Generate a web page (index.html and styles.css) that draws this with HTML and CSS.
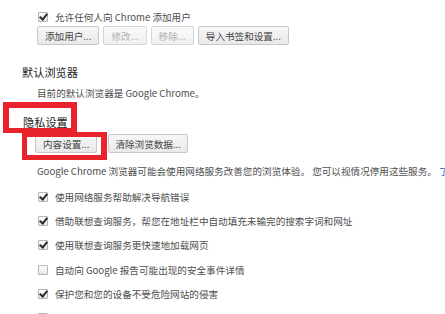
FILE: index.html
```html
<!DOCTYPE html>
<html lang="zh-CN">
<head>
<meta charset="utf-8">
<link rel="stylesheet" href="styles.css">
</head>
<body>
<div class="page">
  <div class="indent">
    <div class="check-row first"><span class="cb on"></span><span>允许任何人向 Chrome 添加用户</span></div>
    <div class="btn-row">
      <span class="btn">添加用户...</span>
      <span class="btn disabled">修改...</span>
      <span class="btn disabled">移除...</span>
      <span class="btn">导入书签和设置...</span>
    </div>
  </div>

  <h3 class="heading h-default">默认浏览器</h3>
  <div class="indent"><p class="text t-default">目前的默认浏览器是 Google Chrome。</p></div>

  <h3 class="heading h-privacy">隐私设置</h3>
  <div class="indent">
    <div class="btn-row privacy-btns">
      <span class="btn">内容设置...</span>
      <span class="btn btn-clear">清除浏览数据...</span>
    </div>
    <p class="text t-privacy">Google Chrome 浏览器可能会使用网络服务改善您的浏览体验。 您可以视情况停用这些服务。 <span class="link">了解详情</span></p>
    <div class="checks">
      <div class="check-row"><span class="cb on"></span><span>使用网络服务帮助解决导航错误</span></div>
      <div class="check-row"><span class="cb on"></span><span>借助联想查询服务，帮您在地址栏中自动填充未输完的搜索字词和网址</span></div>
      <div class="check-row"><span class="cb on"></span><span>使用联想查询服务更快速地加载网页</span></div>
      <div class="check-row"><span class="cb"></span><span>自动向 Google 报告可能出现的安全事件详情</span></div>
      <div class="check-row"><span class="cb on"></span><span>保护您和您的设备不受危险网站的侵害</span></div>
      <div class="check-row"><span class="cb"></span><span>使用网络服务帮助解决拼写错误</span></div>
    </div>
  </div>
</div>
<div class="mark mark-heading"></div>
<div class="mark mark-button"></div>
</body>
</html>
```

FILE: styles.css
```css
html, body {
  margin: 0;
  padding: 0;
  background: #ffffff;
  overflow: hidden;
}
body {
  width: 445px;
  height: 314px;
  position: relative;
  font-family: "Noto Sans CJK SC", "Noto Sans", sans-serif;
  font-size: 9.6px;
  color: #4d4d4d;
}
.page {
  padding-top: 8px;
  white-space: nowrap;
}
.indent {
  padding-left: 37px;
}
.check-row {
  display: flex;
  align-items: center;
  height: 24.2px;
  line-height: 14px;
}
.check-row.first {
  height: 18px;
}
.cb {
  flex: none;
  width: 8px;
  height: 8px;
  margin-left: 1px;
  margin-right: 7px;
  border: 1px solid #b5b5b5;
  border-radius: 1px;
  background: linear-gradient(#fdfdfd, #e8e8e8);
  position: relative;
}
.cb.on::after {
  content: "";
  position: absolute;
  left: 2px;
  top: -1px;
  width: 3px;
  height: 6px;
  border-right: 2px solid #2a2a2a;
  border-bottom: 2px solid #2a2a2a;
  transform: rotate(40deg);
}
.btn-row {
  display: flex;
  gap: 4px;
  height: 19px;
}
.btn {
  display: flex;
  align-items: center;
  height: 17px;
  padding: 0 7px;
  border: 1px solid #c8c8c8;
  border-radius: 2px;
  background: linear-gradient(#f7f7f7, #e9e9e9);
  color: #444;
  line-height: 14px;
}
.btn.disabled {
  color: #b0b0b0;
  border-color: #d6d6d6;
  background: linear-gradient(#fafafa, #f0f0f0);
}
.btn-clear {
  padding: 0 6px;
}
.heading {
  margin: 0;
  padding-left: 22px;
  font-size: 11.2px;
  font-weight: normal;
  line-height: 16px;
  color: #222;
}
.h-default {
  margin-top: 19px;
}
.text {
  margin: 0;
  line-height: 14px;
}
.t-default {
  margin-top: 6px;
}
.h-privacy {
  margin-top: 14px;
  padding-left: 23px;
}
.privacy-btns {
  margin-top: 4px;
  margin-left: -2px;
  gap: 11px;
}
.t-privacy {
  margin-top: 11px;
}
.link {
  color: #1a5fc8;
}
.checks {
  margin-top: 7px;
}
.mark {
  position: absolute;
  border: 6px solid #e8232b;
}
.mark-heading {
  left: 3px;
  top: 102px;
  width: 62px;
  height: 20px;
  border-bottom-width: 5px;
}
.mark-button {
  left: 22px;
  top: 132px;
  width: 74px;
  height: 18px;
  border-width: 5px 6px 5px 5px;
}
```
